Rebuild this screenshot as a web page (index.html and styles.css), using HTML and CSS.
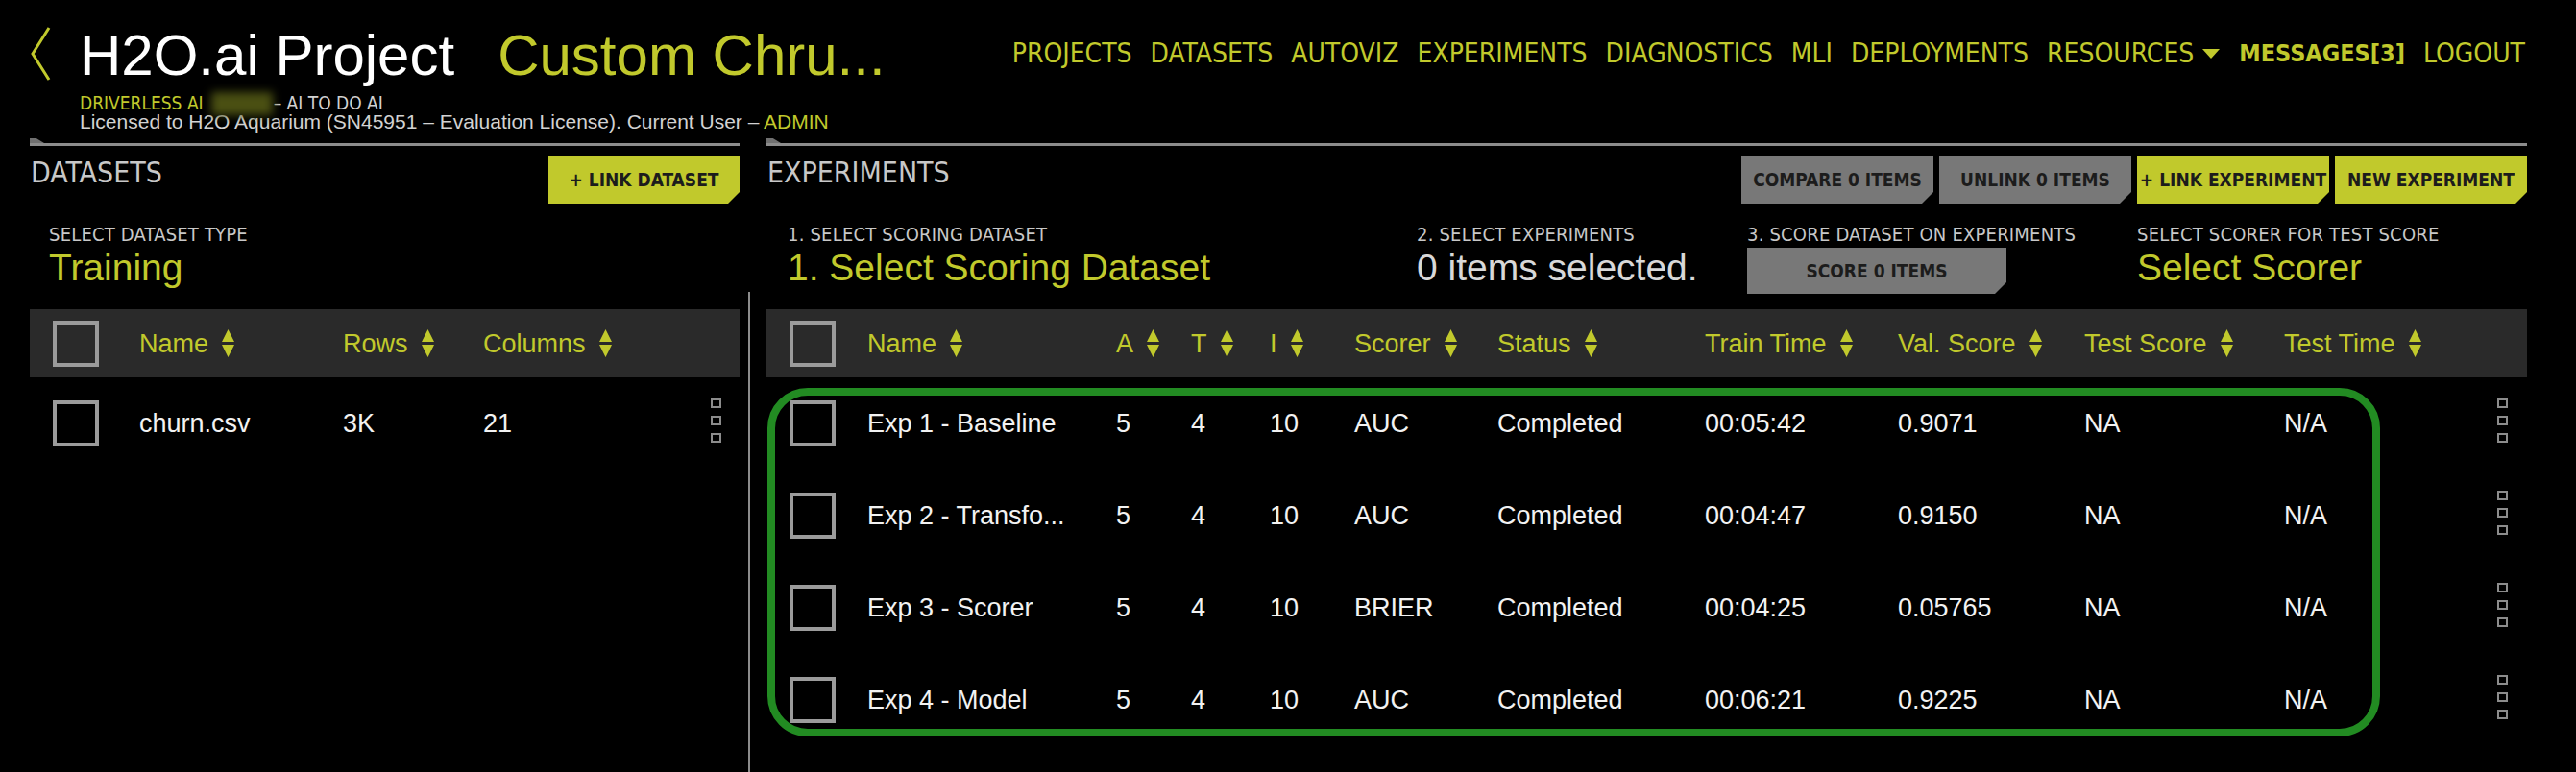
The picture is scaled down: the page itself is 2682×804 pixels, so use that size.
FILE: index.html
```html
<!DOCTYPE html>
<html lang="en">
<head>
<meta charset="utf-8">
<title>H2O.ai Project</title>
<link rel="stylesheet" href="styles.css">
</head>
<body>
<header class="topbar">
  <div class="brand">
    <svg class="back" viewBox="0 0 22 56"><polyline points="20,1 3,28 20,55"/></svg>
    <div class="brand-text">
      <h1 class="title"><span class="proj">H2O.ai Project</span><span class="proj-name">Custom Chru...</span></h1>
      <div class="sub1"><span class="hl">DRIVERLESS AI</span><span class="blur"></span>– AI TO DO AI</div>
      <div class="sub2">Licensed to H2O Aquarium (SN45951 – Evaluation License). Current User – <span class="hl">ADMIN</span></div>
    </div>
  </div>
  <nav class="nav">
    <span>PROJECTS</span>
    <span>DATASETS</span>
    <span>AUTOVIZ</span>
    <span>EXPERIMENTS</span>
    <span>DIAGNOSTICS</span>
    <span>MLI</span>
    <span>DEPLOYMENTS</span>
    <span class="dd">RESOURCES<svg class="caret" viewBox="0 0 18 10"><path d="M0 0H18L9 10Z"/></svg></span>
    <span class="strong">MESSAGES[3]</span>
    <span>LOGOUT</span>
  </nav>
</header>

<main class="workspace">
  <section class="panel">
    <div class="panel-head">
      <h2 class="panel-title">DATASETS</h2>
      <button class="btn btn-primary btn-wide">+ LINK DATASET</button>
    </div>
    <div class="controls controls-ds">
      <div class="ctrl">
        <div class="ctrl-label">SELECT DATASET TYPE</div>
        <div class="ctrl-value">Training</div>
      </div>
    </div>
    <div class="table dtable">
      <div class="row thead">
        <div><div class="cb"></div></div>
        <div class="th">Name<svg class="sort" viewBox="0 0 13 29"><path d="M0 13L6.5 0L13 13Z M0 16H13L6.5 29Z"/></svg></div>
        <div class="th">Rows<svg class="sort" viewBox="0 0 13 29"><path d="M0 13L6.5 0L13 13Z M0 16H13L6.5 29Z"/></svg></div>
        <div class="th">Columns<svg class="sort" viewBox="0 0 13 29"><path d="M0 13L6.5 0L13 13Z M0 16H13L6.5 29Z"/></svg></div>
        <div></div>
      </div>
      <div class="row trow">
        <div><div class="cb"></div></div>
        <div>churn.csv</div>
        <div>3K</div>
        <div>21</div>
        <div class="menu"><i></i><i></i><i></i></div>
      </div>
    </div>
  </section>

  <div class="divider"></div>

  <section class="panel">
    <div class="panel-head">
      <h2 class="panel-title">EXPERIMENTS</h2>
      <div class="btn-group">
        <button class="btn btn-gray">COMPARE 0 ITEMS</button>
        <button class="btn btn-gray">UNLINK 0 ITEMS</button>
        <button class="btn btn-primary">+ LINK EXPERIMENT</button>
        <button class="btn btn-primary">NEW EXPERIMENT</button>
      </div>
    </div>
    <div class="controls controls-exp">
      <div class="ctrl">
        <div class="ctrl-label">1. SELECT SCORING DATASET</div>
        <div class="ctrl-value">1. Select Scoring Dataset</div>
      </div>
      <div class="ctrl">
        <div class="ctrl-label">2. SELECT EXPERIMENTS</div>
        <div class="ctrl-value muted">0 items selected.</div>
      </div>
      <div class="ctrl">
        <div class="ctrl-label">3. SCORE DATASET ON EXPERIMENTS</div>
        <button class="btn btn-gray btn-score">SCORE 0 ITEMS</button>
      </div>
      <div class="ctrl">
        <div class="ctrl-label">SELECT SCORER FOR TEST SCORE</div>
        <div class="ctrl-value">Select Scorer</div>
      </div>
    </div>
    <div class="table etable">
      <div class="row thead">
        <div><div class="cb"></div></div>
        <div class="th">Name<svg class="sort" viewBox="0 0 13 29"><path d="M0 13L6.5 0L13 13Z M0 16H13L6.5 29Z"/></svg></div>
        <div class="th">A<svg class="sort" viewBox="0 0 13 29"><path d="M0 13L6.5 0L13 13Z M0 16H13L6.5 29Z"/></svg></div>
        <div class="th">T<svg class="sort" viewBox="0 0 13 29"><path d="M0 13L6.5 0L13 13Z M0 16H13L6.5 29Z"/></svg></div>
        <div class="th">I<svg class="sort" viewBox="0 0 13 29"><path d="M0 13L6.5 0L13 13Z M0 16H13L6.5 29Z"/></svg></div>
        <div class="th">Scorer<svg class="sort" viewBox="0 0 13 29"><path d="M0 13L6.5 0L13 13Z M0 16H13L6.5 29Z"/></svg></div>
        <div class="th">Status<svg class="sort" viewBox="0 0 13 29"><path d="M0 13L6.5 0L13 13Z M0 16H13L6.5 29Z"/></svg></div>
        <div class="th">Train Time<svg class="sort" viewBox="0 0 13 29"><path d="M0 13L6.5 0L13 13Z M0 16H13L6.5 29Z"/></svg></div>
        <div class="th">Val. Score<svg class="sort" viewBox="0 0 13 29"><path d="M0 13L6.5 0L13 13Z M0 16H13L6.5 29Z"/></svg></div>
        <div class="th">Test Score<svg class="sort" viewBox="0 0 13 29"><path d="M0 13L6.5 0L13 13Z M0 16H13L6.5 29Z"/></svg></div>
        <div class="th">Test Time<svg class="sort" viewBox="0 0 13 29"><path d="M0 13L6.5 0L13 13Z M0 16H13L6.5 29Z"/></svg></div>
        <div></div>
      </div>
      <div class="row trow">
        <div><div class="cb"></div></div>
        <div>Exp 1 - Baseline</div><div>5</div><div>4</div><div>10</div><div>AUC</div><div>Completed</div><div>00:05:42</div><div>0.9071</div><div>NA</div><div>N/A</div>
        <div class="menu"><i></i><i></i><i></i></div>
      </div>
      <div class="row trow">
        <div><div class="cb"></div></div>
        <div>Exp 2 - Transfo...</div><div>5</div><div>4</div><div>10</div><div>AUC</div><div>Completed</div><div>00:04:47</div><div>0.9150</div><div>NA</div><div>N/A</div>
        <div class="menu"><i></i><i></i><i></i></div>
      </div>
      <div class="row trow">
        <div><div class="cb"></div></div>
        <div>Exp 3 - Scorer</div><div>5</div><div>4</div><div>10</div><div>BRIER</div><div>Completed</div><div>00:04:25</div><div>0.05765</div><div>NA</div><div>N/A</div>
        <div class="menu"><i></i><i></i><i></i></div>
      </div>
      <div class="row trow">
        <div><div class="cb"></div></div>
        <div>Exp 4 - Model</div><div>5</div><div>4</div><div>10</div><div>AUC</div><div>Completed</div><div>00:06:21</div><div>0.9225</div><div>NA</div><div>N/A</div>
        <div class="menu"><i></i><i></i><i></i></div>
      </div>
      <div class="highlight"></div>
    </div>
  </section>
</main>
</body>
</html>
```

FILE: styles.css
```css
:root {
  --yellow: #c1c92c;
  --narrow: "DejaVu Sans Condensed", "DejaVu Sans", sans-serif;
  --sans: "Liberation Sans", Arial, sans-serif;
  --line: #8c8c8c;
}

* { box-sizing: border-box; margin: 0; padding: 0; }

html, body { background: #000; }

body {
  width: 2682px;
  height: 804px;
  overflow: hidden;
  font-family: var(--sans);
  color: #f2f2f2;
}

/* ---------- top bar ---------- */
.topbar {
  height: 149px;
  display: flex;
  justify-content: space-between;
  align-items: flex-start;
  padding: 28px 53px 0 31px;
}

.brand { display: flex; align-items: flex-start; }

.back {
  width: 22px;
  height: 56px;
  margin-right: 30px;
  fill: none;
  stroke: var(--yellow);
  stroke-width: 3;
}

.title {
  font-weight: 400;
  font-size: 60px;
  line-height: 60px;
  white-space: nowrap;
}
.proj { color: #fff; }
.proj-name { color: var(--yellow); margin-left: 45px; }

.sub1 {
  margin-top: 8px;
  height: 19px;
  font-family: var(--narrow);
  font-stretch: condensed;
  font-size: 19px;
  line-height: 19px;
  color: #d2d2d2;
  white-space: nowrap;
}
.hl { color: var(--yellow); }
.blur {
  display: inline-block;
  width: 64px;
  height: 24px;
  margin: 0 1px 0 8px;
  vertical-align: -6px;
  background: #4a4f12;
  filter: blur(5px);
}

.sub2 {
  margin-top: 1px;
  font-size: 21px;
  line-height: 22px;
  color: #d2d2d2;
  white-space: nowrap;
}

.nav {
  display: flex;
  align-items: center;
  gap: 19px;
  margin-top: 14px;
  font-family: var(--narrow);
  font-stretch: condensed;
  font-size: 28px;
  line-height: 28px;
  color: var(--yellow);
  white-space: nowrap;
}
.nav .dd { display: flex; align-items: center; }
.caret { width: 18px; height: 10px; margin-left: 9px; fill: var(--yellow); }
.nav .strong { font-weight: 700; font-size: 25px; margin-left: 1px; }

/* ---------- workspace ---------- */
.workspace {
  display: grid;
  grid-template-columns: 739px 28px 1833px;
  height: 655px;
  margin-left: 31px;
}

.panel {
  position: relative;
  display: flex;
  flex-direction: column;
  border-top: 3px solid var(--line);
}
.panel::before {
  content: "";
  position: absolute;
  left: 0;
  top: -8px;
  width: 15px;
  height: 5px;
  background: #707070;
  clip-path: polygon(0 0, 45% 0, 100% 100%, 0 100%);
}

.divider {
  margin: 155px 0 0 9px;
  width: 2px;
  background: var(--line);
}

.panel-head {
  display: flex;
  justify-content: space-between;
  align-items: flex-start;
  height: 60px;
  padding-top: 10px;
}

.panel-title {
  margin-top: 2px;
  padding-left: 1px;
  font-family: var(--narrow);
  font-stretch: condensed;
  font-weight: 400;
  font-size: 30px;
  line-height: 32px;
  color: #c8c8c8;
}

.btn-group { display: flex; gap: 6px; }

.btn {
  display: flex;
  align-items: center;
  justify-content: center;
  width: 200px;
  height: 50px;
  border: none;
  font-family: var(--narrow);
  font-stretch: condensed;
  font-weight: 700;
  font-size: 19px;
  color: #1c1c1c;
  white-space: nowrap;
  clip-path: polygon(0 0, 100% 0, 100% calc(100% - 12px), calc(100% - 12px) 100%, 0 100%);
}
.btn-primary { background: var(--yellow); }
.btn-gray { background: #787878; }
.btn-wide { width: 199px; }
.btn-score { width: 270px; height: 48px; margin-top: 3px; }

.controls {
  display: grid;
  height: 72px;
  margin-top: 22px;
}
.controls-ds { padding-left: 20px; }
.controls-exp {
  padding-left: 22px;
  grid-template-columns: 655px 344px 406px 1fr;
}

.ctrl-label {
  font-family: var(--narrow);
  font-stretch: condensed;
  font-size: 20px;
  line-height: 21px;
  letter-spacing: 0.2px;
  color: #c8c8c8;
  white-space: nowrap;
}
.ctrl-value {
  margin-top: 4px;
  font-size: 39px;
  line-height: 39px;
  color: var(--yellow);
  white-space: nowrap;
}
.ctrl-value.muted { color: #d8d8d8; }

/* ---------- tables ---------- */
.table {
  position: relative;
  margin-top: 16px;
}

.row {
  display: grid;
  align-items: center;
  font-size: 27px;
  line-height: 32px;
  white-space: nowrap;
}
.thead { height: 71px; background: #2a2a2a; }
.trow { height: 96px; color: #f2f2f2; }

.dtable .row {
  padding: 0 17px 0 24px;
  grid-template-columns: 90px 212px 146px 237px 12px;
}
.etable .row {
  padding: 0 19px 0 24px;
  grid-template-columns: 81px 259px 78px 82px 88px 149px 216px 201px 194px 208px 222px 12px;
}

.th {
  display: flex;
  align-items: center;
  color: var(--yellow);
}
.sort {
  flex: none;
  width: 13px;
  height: 29px;
  margin-left: 14px;
  fill: var(--yellow);
}

.cb {
  width: 48px;
  height: 48px;
  border: 4px solid #9b9b9b;
}

.menu {
  display: flex;
  flex-direction: column;
  gap: 8px;
  margin-top: -6px;
}
.menu i {
  display: block;
  width: 11px;
  height: 10px;
  border: 2px solid #8c8c8c;
}

.highlight {
  position: absolute;
  left: 1px;
  top: 82px;
  width: 1679px;
  height: 363px;
  border: 8px solid #228b22;
  border-radius: 42px;
  pointer-events: none;
}
```
